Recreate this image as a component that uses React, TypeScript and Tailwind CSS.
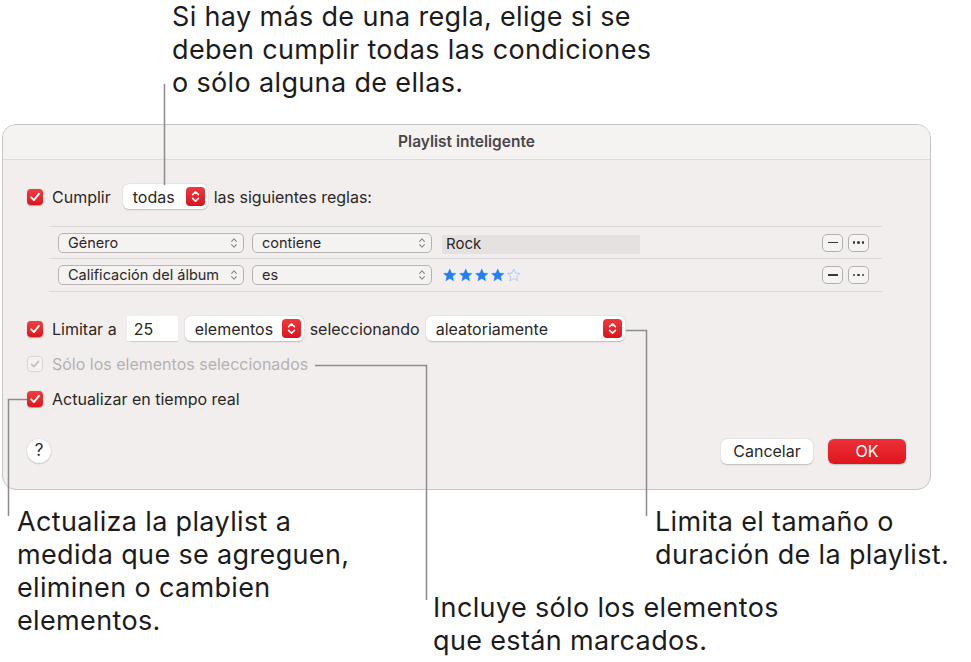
import React from "react";

const STAR = "M12 2.5l2.8 6.5 7 .6-5.3 4.6 1.6 6.9L12 17.4l-6.1 3.7 1.6-6.9-5.3-4.6 7-.6z";

function Check({ disabled }: { disabled?: boolean }) {
  return (
    <span
      className={`flex h-4 w-4 shrink-0 items-center justify-center rounded-[4px] ${
        disabled
          ? "border border-[#dad6d6] bg-[#f5f2f2]"
          : "bg-linear-to-b from-[#f03d43] to-[#dc121a] shadow-[0_0.5px_1px_rgba(0,0,0,0.3)]"
      }`}
    >
      <svg viewBox="0 0 16 16" className="h-4 w-4">
        <path
          d="M4.2 8.4 L6.9 11.1 L11.9 4.9"
          fill="none"
          stroke={disabled ? "#c4c0c0" : "#fff"}
          strokeWidth="2"
          strokeLinecap="round"
          strokeLinejoin="round"
        />
      </svg>
    </span>
  );
}

function Stepper() {
  return (
    <span className="flex h-[19px] w-[19px] shrink-0 items-center justify-center rounded-[4px] bg-linear-to-b from-[#f0373e] to-[#db1019]">
      <svg viewBox="0 0 19 19" className="h-[19px] w-[19px]">
        <path
          d="M6.6 7.6 L9.5 4.8 L12.4 7.6 M6.6 11.4 L9.5 14.2 L12.4 11.4"
          fill="none"
          stroke="#fff"
          strokeWidth="1.6"
          strokeLinecap="round"
          strokeLinejoin="round"
        />
      </svg>
    </span>
  );
}

function SmallChevrons() {
  return (
    <svg viewBox="0 0 8 12" className="h-3 w-2">
      <path
        d="M1.6 4.3 L4 1.9 L6.4 4.3 M1.6 7.7 L4 10.1 L6.4 7.7"
        fill="none"
        stroke="#8a8686"
        strokeWidth="1.1"
        strokeLinecap="round"
        strokeLinejoin="round"
      />
    </svg>
  );
}

function PlainPopup({ label, cls }: { label: string; cls: string }) {
  return (
    <div
      className={`flex h-5 items-center justify-between rounded-[5px] border border-[#b7b3b3] bg-[#f5f2f2] pl-[9px] pr-[5px] text-[14.5px] text-[#2b2828] ${cls}`}
    >
      <span>{label}</span>
      <SmallChevrons />
    </div>
  );
}

function RedPopup({ label, cls }: { label: string; cls: string }) {
  return (
    <div
      className={`flex h-[25px] items-center justify-between rounded-[6px] bg-white pl-[10px] pr-[3px] shadow-[0_0.5px_1.5px_rgba(0,0,0,0.22)] ${cls}`}
    >
      <span>{label}</span>
      <Stepper />
    </div>
  );
}

function SmallBtn({ kind }: { kind: "minus" | "dots" }) {
  return (
    <div className="flex h-[18px] w-[21px] items-center justify-center rounded-[5px] border border-[#b3afaf] bg-[#f6f3f3]">
      {kind === "minus" ? (
        <span className="h-[1.5px] w-[10px] bg-[#3a3737]" />
      ) : (
        <span className="flex gap-[2px]">
          <span className="h-[2.5px] w-[2.5px] rounded-full bg-[#3a3737]" />
          <span className="h-[2.5px] w-[2.5px] rounded-full bg-[#3a3737]" />
          <span className="h-[2.5px] w-[2.5px] rounded-full bg-[#3a3737]" />
        </span>
      )}
    </div>
  );
}

function Stars({ filled }: { filled: number }) {
  return (
    <div className="flex gap-[0.5px]">
      {[0, 1, 2, 3, 4].map((i) => (
        <svg key={i} viewBox="0 0 24 24" className="h-[16px] w-[15.5px]">
          <path
            d={STAR}
            fill={i < filled ? "#1f7ff5" : "none"}
            stroke={i < filled ? "#1f7ff5" : "#a9c7f2"}
            strokeWidth={i < filled ? 0.5 : 1.4}
            strokeLinejoin="round"
          />
        </svg>
      ))}
    </div>
  );
}

export default function App() {
  return (
    <div className="relative h-[662px] w-[971px] overflow-hidden bg-white font-[Inter,sans-serif] text-[#1d1c1c]">
      {/* Callout superior */}
      <div className="pl-[172px] text-[27px] leading-[33px] tracking-[0.35px]">
        <p>Si hay más de una regla, elige si se</p>
        <p>deben cumplir todas las condiciones</p>
        <p>o sólo alguna de ellas.</p>
      </div>

      {/* Diálogo */}
      <div className="ml-[2px] mt-[25px] flex h-[366px] w-[929px] flex-col overflow-hidden rounded-[14px] border border-[#c8c4c4] bg-[#f2eeee]">
        <div className="flex h-[35px] shrink-0 items-center justify-center border-b border-[#dedada] bg-[#f5f2f2] text-[15.5px] font-semibold text-[#4a4747]">
          Playlist inteligente
        </div>

        <div className="flex flex-col px-[24px] text-[16px] text-[#2a2727]">
          {/* Cumplir */}
          <div className="mt-[24px] flex h-[25px] items-center">
            <Check />
            <span className="ml-[9px]">Cumplir</span>
            <RedPopup label="todas" cls="ml-[12px] w-[85px]" />
            <span className="ml-[6px]">las siguientes reglas:</span>
          </div>

          {/* Reglas */}
          <div className="ml-[22px] mt-[17px] w-[833px] border-t border-[#dcd8d8]">
            <div className="flex h-[32px] items-center border-b border-[#dcd8d8] pl-[9px] pr-[13px]">
              <PlainPopup label="Género" cls="w-[186px]" />
              <PlainPopup label="contiene" cls="ml-[8px] w-[180px]" />
              <div className="ml-[10px] mt-[3px] flex h-[19px] w-[198px] items-center bg-[#e6e1e1] pl-[4px] text-[15px]">
                Rock
              </div>
              <div className="ml-auto flex gap-[5px]">
                <SmallBtn kind="minus" />
                <SmallBtn kind="dots" />
              </div>
            </div>
            <div className="flex h-[33px] items-center border-b border-[#dcd8d8] pl-[9px] pr-[13px]">
              <PlainPopup label="Calificación del álbum" cls="w-[186px]" />
              <PlainPopup label="es" cls="ml-[8px] w-[180px]" />
              <div className="ml-[10px]">
                <Stars filled={4} />
              </div>
              <div className="ml-auto flex gap-[5px]">
                <SmallBtn kind="minus" />
                <SmallBtn kind="dots" />
              </div>
            </div>
          </div>

          {/* Limitar */}
          <div className="mt-[24px] flex h-[25px] items-center">
            <Check />
            <span className="ml-[9px]">Limitar a</span>
            <div className="ml-[10px] flex h-[25px] w-[51px] items-center bg-white pl-[7px] shadow-[0_0.5px_1px_rgba(0,0,0,0.15)]">
              25
            </div>
            <RedPopup label="elementos" cls="ml-[7px] w-[119px]" />
            <span className="ml-[6px]">seleccionando</span>
            <RedPopup label="aleatoriamente" cls="ml-[6px] w-[199px]" />
          </div>

          <div className="mt-[10px] flex h-[25px] items-center">
            <Check disabled />
            <span className="ml-[9px] text-[#b5b1b1]">Sólo los elementos seleccionados</span>
          </div>

          <div className="mt-[10px] flex h-[25px] items-center">
            <Check />
            <span className="ml-[9px]">Actualizar en tiempo real</span>
          </div>

          {/* Botones */}
          <div className="mt-[27px] flex h-[26px] items-center">
            <div className="flex h-6 w-6 items-center justify-center rounded-full bg-white text-[17px] shadow-[0_0.5px_1.5px_rgba(0,0,0,0.3)]">
              ?
            </div>
            <div className="ml-auto flex h-[25px] w-[92px] items-center justify-center rounded-[6px] bg-white shadow-[0_0.5px_1.5px_rgba(0,0,0,0.22)]">
              Cancelar
            </div>
            <div className="ml-[15px] flex h-[25px] w-[78px] items-center justify-center rounded-[6px] bg-linear-to-b from-[#ec2f37] to-[#df141c] text-white shadow-[0_0.5px_1.5px_rgba(0,0,0,0.2)]">
              OK
            </div>
          </div>
        </div>
      </div>

      {/* Callouts inferiores */}
      <div className="mt-[15px] flex text-[27px] leading-[33px] tracking-[0.35px]">
        <div className="ml-[17px] w-[416px]">
          <p>Actualiza la playlist a</p>
          <p>medida que se agreguen,</p>
          <p>eliminen o cambien</p>
          <p>elementos.</p>
        </div>
        <div className="w-[222px] pt-[86px]">
          <p className="whitespace-nowrap">Incluye sólo los elementos</p>
          <p className="whitespace-nowrap">que están marcados.</p>
        </div>
        <div>
          <p className="whitespace-nowrap">Limita el tamaño o</p>
          <p className="whitespace-nowrap">duración de la playlist.</p>
        </div>
      </div>

      {/* Líneas guía */}
      <svg className="pointer-events-none absolute left-0 top-0 h-[662px] w-[971px]" viewBox="0 0 971 662">
        <g fill="none" stroke="#8d8b8b" strokeWidth="1.5">
          <path d="M164.5 84 V185" />
          <path d="M626 330.5 H646.5 V516" />
          <path d="M315 365.5 H426.5 V600" />
          <path d="M27 399.5 H8.5 V516" />
        </g>
      </svg>
    </div>
  );
}
